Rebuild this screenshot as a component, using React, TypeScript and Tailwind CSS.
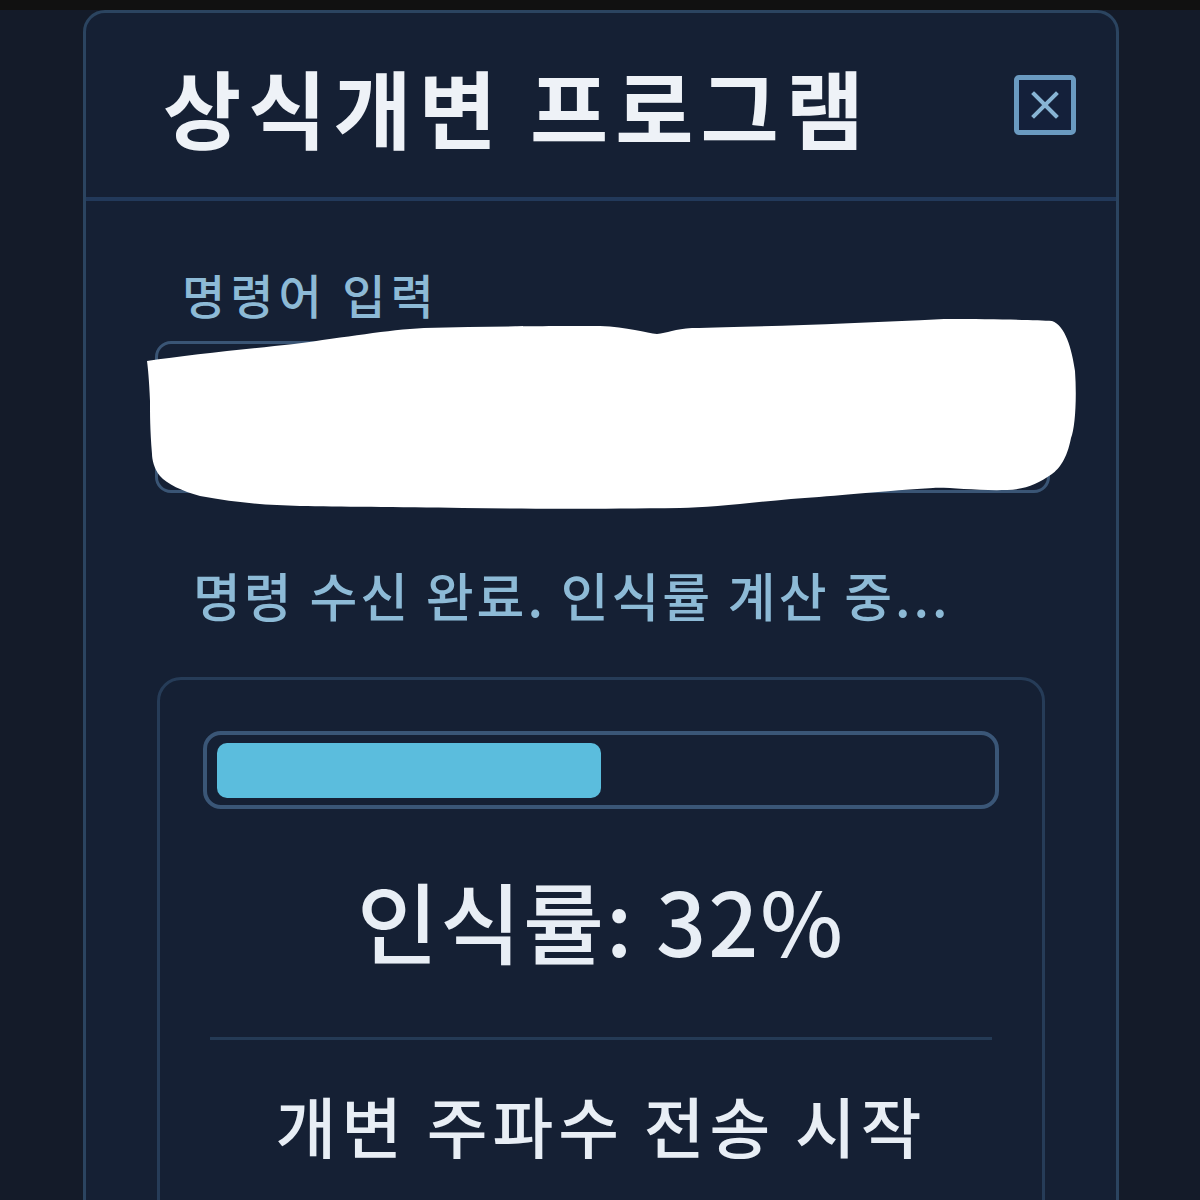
import React from "react";

const font = { fontFamily: '"Noto Sans CJK KR", "Noto Sans", sans-serif' };

// redaction scribble over the input, coordinates relative to svg origin
const blobPath =
  "M0 42 C40 36 100 30 147 25 C200 18 240 11 277 9 C350 7 420 7 453 7 C480 8 500 14 510 15 C520 14 528 10 545 9 " +
  "C600 8 700 5 797 0 C850 0 890 1 905 2 C918 6 925 30 928 52 C930 80 928 110 924 119 C920 140 912 150 905 155 " +
  "C890 165 880 170 860 171 C830 172 800 168 786 169 C720 173 680 178 644 180 C600 184 560 189 533 189 " +
  "C450 190 380 190 316 189 C250 188 190 188 153 187 C120 186 90 184 53 177 C35 172 20 165 13 157 " +
  "C7 150 5 140 5 135 C3 110 3 95 3 82 C2 60 1 50 0 42 Z";

const CloseButton: React.FC = () => (
  <button className="flex h-[60px] w-[62px] items-center justify-center rounded-[5px] border-[5px] border-[#6a9ac0] bg-[#14203a]">
    <svg width="28" height="28" viewBox="0 0 28 28">
      <path
        d="M3 3 L25 25 M25 3 L3 25"
        stroke="#88b4d4"
        strokeWidth="4"
        strokeLinecap="square"
      />
    </svg>
  </button>
);

const App: React.FC = () => {
  const progress = 384;

  return (
    <div className="h-[1200px] w-[1200px] overflow-hidden bg-[#141b29]" style={font}>
      <div className="h-[10px] w-full bg-[#111111]" />
      <div className="ml-[83px] h-[1260px] w-[1036px] rounded-[22px] border-[3px] border-[#2b4460] bg-[#152034]">
        {/* header */}
        <div className="flex h-[184px] items-center justify-between pl-[77px] pr-[40px]">
          <h1 className="text-[85px] font-bold leading-none tracking-[7px] text-[#eef2f7]">
            상식개변 프로그램
          </h1>
          <CloseButton />
        </div>
        <div className="h-[4px] w-full bg-[#22395a]" />

        {/* body */}
        <div className="pl-[69px] pr-[66px] pt-[69px]">
          <div className="ml-[27px] text-[47px] font-medium leading-none tracking-[5px] text-[#8dbad6]">
            명령어 입력
          </div>

          <div className="relative mt-[24px] h-[152px] w-[895px]">
            <input
              type="text"
              className="h-full w-full rounded-[16px] border-[3px] border-[#3a5575] bg-transparent"
            />
            <svg
              className="absolute left-[-8px] top-[-22px]"
              width="935"
              height="192"
              viewBox="0 0 935 192"
            >
              <path d={blobPath} fill="#ffffff" />
            </svg>
          </div>

          <div className="ml-[38px] mt-[76px] text-[52px] font-medium leading-none tracking-[3px] text-[#8dbad6]">
            명령 수신 완료. 인식률 계산 중...
          </div>

          <div className="ml-[2px] mt-[56px] h-[600px] w-[888px] rounded-[24px] border-[3px] border-[#263c58] px-[43px] pt-[51px]">
            <div className="flex h-[78px] items-center rounded-[18px] border-[4px] border-[#3a5677] px-[10px]">
              <div
                className="h-[55px] rounded-[10px] bg-[#5bbddd]"
                style={{ width: progress }}
              />
            </div>

            <div className="mt-[66px] text-center text-[88px] font-medium leading-none tracking-[2px] text-[#e8eef5]">
              인식률: 32%
            </div>

            <div className="mx-[7px] mt-[74px] h-[3px] bg-[#243a55]" />

            <div className="mt-[51px] text-center text-[66px] font-medium leading-none tracking-[5px] text-[#e8eef5]">
              개변 주파수 전송 시작
            </div>
          </div>
        </div>
      </div>
    </div>
  );
};

export default App;
